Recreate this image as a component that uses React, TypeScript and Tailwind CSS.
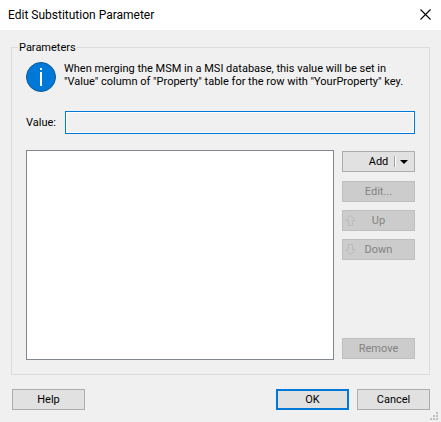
import type { ButtonHTMLAttributes } from "react";

type DialogButtonProps = ButtonHTMLAttributes<HTMLButtonElement> & { primary?: boolean };

function DialogButton({ className = "", primary = false, children, ...rest }: DialogButtonProps) {
  const border = primary ? "border-2 border-[#0078d7]" : "border border-[#adadad] disabled:border-[#bfbfbf]";
  return (
    <button
      type="button"
      className={`relative flex h-[21px] w-[73px] items-center justify-center bg-[#e1e1e1] text-black disabled:bg-[#cccccc] disabled:text-[#838383] ${border} ${className}`}
      {...rest}
    >
      {children}
    </button>
  );
}

function ArrowIcon({ down = false }: { down?: boolean }) {
  return (
    <svg
      width="11"
      height="13"
      viewBox="0 0 11 13"
      className={`absolute left-[2px] ${down ? "rotate-180" : ""}`}
      fill="none"
      stroke="#bababa"
      aria-hidden="true"
    >
      <path d="M5.5 1.2 L10 5.8 V6.5 H7.5 V11.5 H3.5 V6.5 H1 V5.8 Z" />
    </svg>
  );
}

export default function App() {
  return (
    <div className="flex min-h-screen flex-col bg-[#f0f0f0] font-[Roboto,'Liberation_Sans',sans-serif] text-[11px] leading-[13px] text-black">
      <header className="flex h-[30px] items-center justify-between bg-white pr-[10px] pl-2">
        <h1 className="text-[12px] leading-4">Edit Substitution Parameter</h1>
        <button type="button" aria-label="Close" className="pb-[2px]">
          <svg width="11" height="11" viewBox="0 0 11 11" fill="none" stroke="#000" aria-hidden="true">
            <path d="M0.5 0.5 L10.5 10.5 M10.5 0.5 L0.5 10.5" strokeWidth="1.1" />
          </svg>
        </button>
      </header>

      <main className="px-[11px] pt-[11px]">
        <fieldset className="min-w-0 border border-[#dcdcdc] px-[14px] pb-[14px]">
          <legend className="-ml-2 px-[1px]">Parameters</legend>

          <div className="flex gap-2 pt-2">
            <svg width="30" height="30" viewBox="0 0 30 30" className="shrink-0" aria-hidden="true">
              <circle cx="15" cy="15" r="14.5" fill="#0078d7" stroke="#0a5a9c" />
              <rect x="14" y="10" width="2" height="14" fill="#fff" />
              <rect x="14" y="6" width="2" height="2" fill="#fff" />
            </svg>
            <p>
              When merging the MSM in a MSI database, this value will be set in
              <br />
              "Value" column of "Property" table for the row with "YourProperty" key.
            </p>
          </div>

          <div className="mt-[19px] flex items-center">
            <label htmlFor="value" className="w-[39px] shrink-0">
              Value:
            </label>
            <input
              id="value"
              type="text"
              readOnly
              className="h-[23px] min-w-0 flex-1 border border-[#0078d7] bg-[#f0f0f0] px-1 shadow-[inset_0_0_0_1px_#ffffff] outline-none"
            />
          </div>

          <div className="mt-4 flex gap-2">
            <div role="listbox" aria-label="Parameter values" className="h-[210px] flex-1 border border-[#828790] bg-white" />
            <div className="flex flex-col gap-2 py-[1px]">
              <DialogButton aria-haspopup="menu" className="mb-[1px]">
                Add
                <span className="absolute right-[18px] h-[11px] w-[2px] border-r border-l border-r-white border-l-[#a0a0a0]" />
                <svg width="8" height="4" viewBox="0 0 8 4" className="absolute right-[6px]" aria-hidden="true">
                  <path d="M0 0 H8 L4 4 Z" />
                </svg>
              </DialogButton>
              <DialogButton disabled>Edit...</DialogButton>
              <DialogButton disabled>
                <ArrowIcon />
                Up
              </DialogButton>
              <DialogButton disabled>
                <ArrowIcon down />
                Down
              </DialogButton>
              <DialogButton disabled className="mt-auto">
                Remove
              </DialogButton>
            </div>
          </div>
        </fieldset>

        <footer className="mt-[14px] flex gap-2 pl-[1px]">
          <DialogButton>Help</DialogButton>
          <DialogButton primary className="ml-auto">
            OK
          </DialogButton>
          <DialogButton>Cancel</DialogButton>
        </footer>
      </main>

      <div className="mt-auto flex justify-end pr-[3px] pb-[2px]">
        <svg width="8" height="8" viewBox="0 0 8 8" fill="#bfbfbf" aria-hidden="true">
          <path d="M6 0h2v2H6zM3 3h2v2H3zM6 3h2v2H6zM0 6h2v2H0zM3 6h2v2H3zM6 6h2v2H6z" />
        </svg>
      </div>
    </div>
  );
}
